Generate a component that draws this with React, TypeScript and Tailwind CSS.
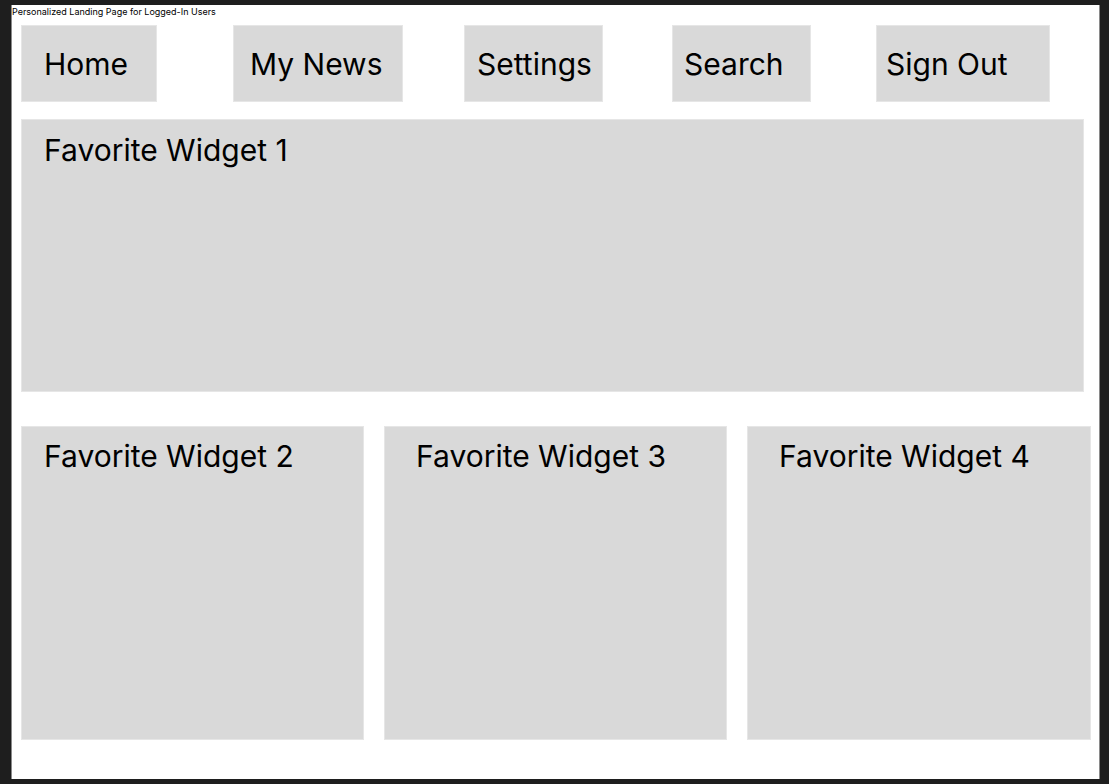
import React from "react";

const navItems = [
  { label: "Home", box: "w-[136px] pl-[22px]", gap: "ml-0" },
  { label: "My News", box: "w-[170px] pl-[16px]", gap: "ml-[76px]" },
  { label: "Settings", box: "w-[139px] pl-[12px]", gap: "ml-[61px]" },
  { label: "Search", box: "w-[139px] pl-[11px]", gap: "ml-[69px]" },
  { label: "Sign Out", box: "w-[174px] pl-[9px]", gap: "ml-[65px]" },
];

const widgets = [
  { label: "Favorite Widget 2", box: "w-[343px] pl-[22px]" },
  { label: "Favorite Widget 3", box: "w-[343px] pl-[31px]" },
  { label: "Favorite Widget 4", box: "w-[344px] pl-[31px]" },
];

export default function App() {
  return (
    <div className="w-[1109px] h-[784px] bg-[#1e1e1e] pt-[5px] pl-[11px] overflow-hidden font-['Inter',sans-serif] text-black">
      <div className="w-[1089px] h-[774px] bg-white border-x border-[#8a8a8a]">
        <div className="h-[20px] pt-[1px] text-[9px] leading-[11px]">
          Personalized Landing Page for Logged-In Users
        </div>

        <nav className="flex pl-[9px]">
          {navItems.map((item) => (
            <div
              key={item.label}
              className={`${item.gap} ${item.box} h-[77px] flex items-center bg-[#d9d9d9] border border-[#e6e6e6] text-[30px] leading-none`}
            >
              {item.label}
            </div>
          ))}
        </nav>

        <div className="ml-[9px] mt-[17px] w-[1063px] h-[273px] bg-[#d9d9d9] border border-[#e6e6e6] pl-[22px] pt-[12px] text-[30px] leading-[36px]">
          Favorite Widget 1
        </div>

        <div className="flex gap-[20px] ml-[9px] mt-[34px]">
          {widgets.map((w) => (
            <div
              key={w.label}
              className={`${w.box} h-[314px] bg-[#d9d9d9] border border-[#e6e6e6] pt-[11px] text-[30px] leading-[36px]`}
            >
              {w.label}
            </div>
          ))}
        </div>
      </div>
    </div>
  );
}
